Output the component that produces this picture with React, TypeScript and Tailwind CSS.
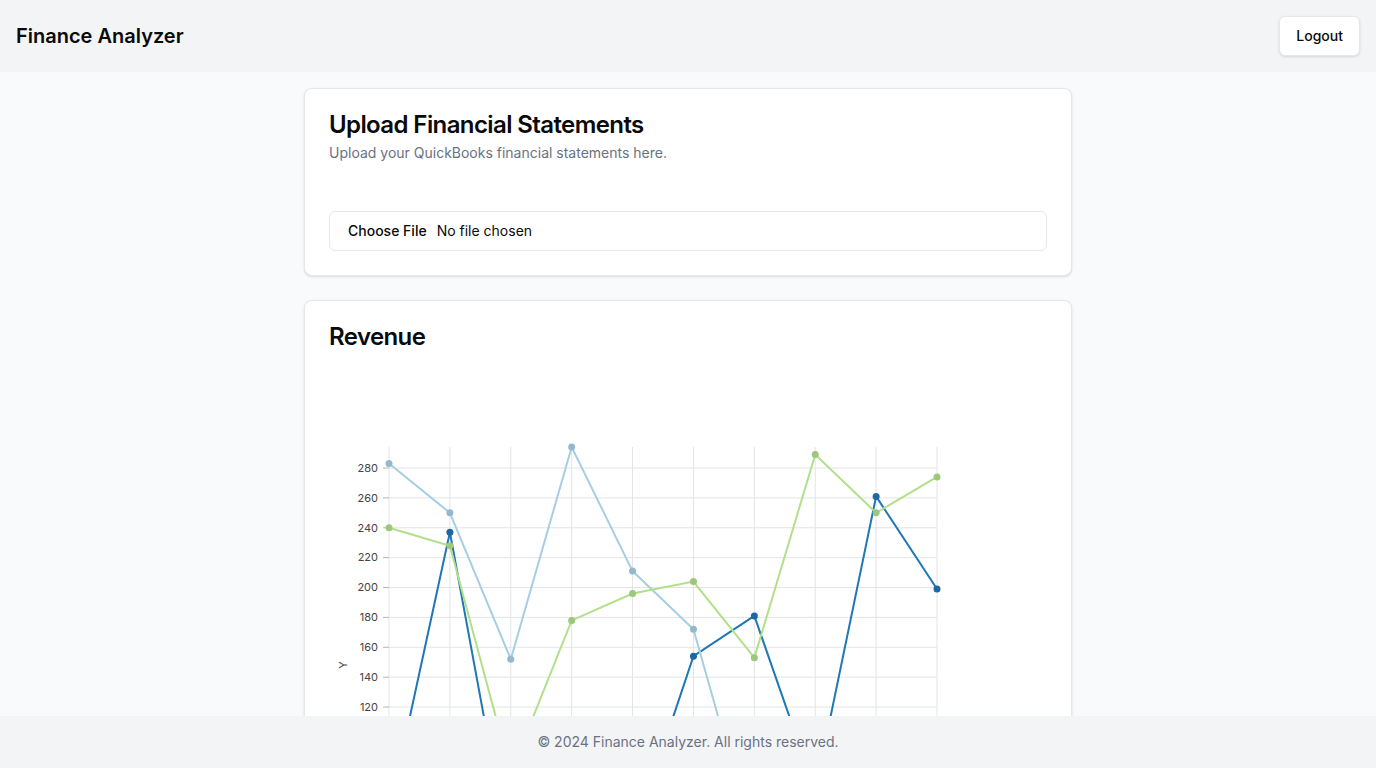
import React from "react";

const series = [
  { id: "a", line: "#1f78b4", point: "#1b69a0", data: [49, 237, 16, 60, 32, 154, 181, 64, 261, 199] },
  { id: "b", line: "#a6cee3", point: "#95b9cc", data: [283, 250, 152, 294, 211, 172, 28, 45, 20, 60] },
  { id: "c", line: "#b2df8a", point: "#9dc77a", data: [240, 228, 76, 178, 196, 204, 153, 289, 250, 274] },
];

const ticks = [280, 260, 240, 220, 200, 180, 160, 140, 120, 100, 80, 60, 40, 20];
const xs = Array.from({ length: 10 }, (_, i) => 60 + i * 60.89);
const yOf = (v: number) => 95 + (280 - v) * 1.494;
const TOP = 74;
const BOTTOM = 510;

function RevenueChart() {
  return (
    <svg width="718" height="540" className="block">
      {/* grid */}
      {xs.map((x, i) => (
        <line key={"vx" + i} x1={x} x2={x} y1={TOP} y2={BOTTOM} stroke="#e3e4e6" strokeWidth="1" />
      ))}
      {ticks.map((t) => (
        <line key={"hy" + t} x1={60} x2={608} y1={yOf(t)} y2={yOf(t)} stroke="#e3e4e6" strokeWidth="1" />
      ))}
      {/* y axis */}
      {ticks.map((t) => (
        <g key={"tk" + t}>
          <line x1={54} x2={60} y1={yOf(t)} y2={yOf(t)} stroke="#b5b5b5" strokeWidth="1" />
          <text x={49} y={yOf(t)} dy="0.35em" textAnchor="end" fontSize="11" fill="#444" fontFamily="Inter, sans-serif">
            {t}
          </text>
        </g>
      ))}
      <text
        transform="translate(14, 292) rotate(-90)"
        textAnchor="middle"
        dy="0.35em"
        fontSize="11"
        fill="#444"
        fontFamily="Inter, sans-serif"
      >
        Y
      </text>
      {/* lines */}
      {series.map((s) => (
        <polyline
          key={s.id}
          fill="none"
          stroke={s.line}
          strokeWidth="2"
          points={s.data.map((v, i) => `${xs[i]},${yOf(v)}`).join(" ")}
        />
      ))}
      {series.map((s) =>
        s.data.map((v, i) => <circle key={s.id + i} cx={xs[i]} cy={yOf(v)} r="3.5" fill={s.point} />)
      )}
    </svg>
  );
}

export default function App() {
  return (
    <div className="min-h-screen bg-gray-50 text-[#0a0a0a]" style={{ fontFamily: "Inter, 'Noto Sans', sans-serif" }}>
      <header className="flex items-center justify-between bg-gray-100 px-4 py-4">
        <h1 className="text-xl font-semibold">Finance Analyzer</h1>
        <button className="h-10 rounded-md border border-gray-200 bg-white px-4 text-sm font-medium shadow-sm">
          Logout
        </button>
      </header>

      <main className="mx-auto max-w-3xl space-y-6 py-4 pb-20">
        <div className="rounded-lg border border-gray-200 bg-white shadow-sm">
          <div className="flex flex-col space-y-1.5 p-6">
            <h2 className="text-2xl font-semibold leading-none tracking-tight">Upload Financial Statements</h2>
            <p className="text-sm text-gray-500">Upload your QuickBooks financial statements here.</p>
          </div>
          <div className="p-6 pt-0">
            <div className="mt-6 flex h-10 w-full items-center rounded-md border border-gray-200 bg-white px-3 text-sm">
              <span className="mr-1 px-1.5 font-medium">Choose File</span>
              <span>No file chosen</span>
            </div>
          </div>
        </div>

        <div className="rounded-lg border border-gray-200 bg-white shadow-sm">
          <div className="p-6">
            <h2 className="text-2xl font-semibold leading-none tracking-tight">Revenue</h2>
          </div>
          <div className="p-6 pt-0">
            <RevenueChart />
          </div>
        </div>
      </main>

      <footer className="fixed bottom-0 left-0 right-0 flex h-[52px] items-center justify-center bg-gray-100 text-sm text-gray-500">
        © 2024 Finance Analyzer. All rights reserved.
      </footer>
    </div>
  );
}
